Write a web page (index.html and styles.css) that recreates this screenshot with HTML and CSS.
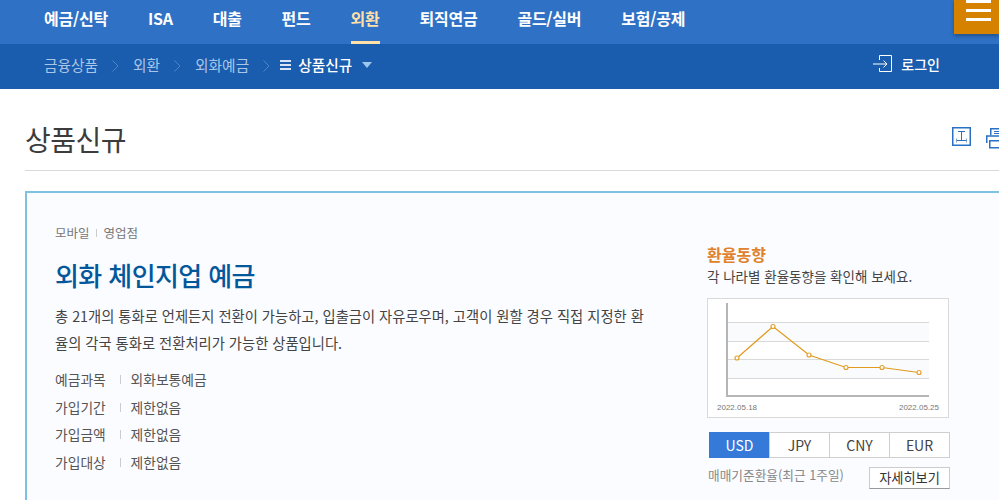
FILE: index.html
```html
<!DOCTYPE html>
<html lang="ko">
<head>
<meta charset="utf-8">
<title>상품신규</title>
<link rel="stylesheet" href="styles.css">
</head>
<body>
<header class="top">
  <nav class="gnb">
    <a>예금/신탁</a><a>ISA</a><a>대출</a><a>펀드</a><a class="on">외환</a><a>퇴직연금</a><a>골드/실버</a><a>보험/공제</a>
  </nav>
  <button class="menu" aria-label="메뉴"><i></i><i></i><i></i></button>
  <div class="crumbs">
    <span class="crumb">금융상품</span>
    <svg class="chev" width="7" height="12" viewBox="0 0 7 12"><path d="M.5.5 6 6 .5 11.500" fill="none" stroke="#4f86c6"/></svg>
    <span class="crumb">외환</span>
    <svg class="chev" width="7" height="12" viewBox="0 0 7 12"><path d="M.5.5 6 6 .5 11.500" fill="none" stroke="#4f86c6"/></svg>
    <span class="crumb">외화예금</span>
    <svg class="chev" width="7" height="12" viewBox="0 0 7 12"><path d="M.5.5 6 6 .5 11.500" fill="none" stroke="#4f86c6"/></svg>
    <span class="burger"><i></i><i></i><i></i></span>
    <span class="current">상품신규</span>
    <span class="caret"></span>
    <a class="login">
      <svg width="20" height="18" viewBox="0 0 20 18"><path d="M6.500 5V.5h12v16h-12V13M0 9h14M10.500 5.500 14 9l-3.500 3.500" fill="none" stroke="#fff"/></svg>
      로그인
    </a>
  </div>
</header>
<main class="page">
  <div class="title-row">
    <h1>상품신규</h1>
    <div class="tools">
      <svg width="19" height="19" viewBox="0 0 19 19"><path d="M.75.75h17.500v17.500H.75z" fill="none" stroke="#2a70c4" stroke-width="1.500"/><path d="M6 4.500h7M9.500 4.500V13M4.500 13.500h10" fill="none" stroke="#2a70c4"/><path d="M4.500 11.500v4M14.500 11.500v4" stroke="#7d9fca"/></svg>
      <svg width="20" height="22" viewBox="0 0 20 22"><path d="M4.750 8V1.750h16V8M.75 16V9h20M3.750 13.750h17v7h-17z" fill="none" stroke="#2a70c4" stroke-width="1.500"/><path d="M8 4.500h10M8 6.500h10" stroke="#2a70c4"/></svg>
    </div>
  </div>
  <section class="card">
    <div class="info">
      <p class="tags"><span>모바일</span><span class="tag-sep"></span><span>영업점</span></p>
      <h2>외화 체인지업 예금</h2>
      <p class="desc">총 21개의 통화로 언제든지 전환이 가능하고, 입출금이 자유로우며, 고객이 원할 경우 직접 지정한 환율의 각국 통화로 전환처리가 가능한 상품입니다.</p>
      <dl class="specs">
        <div><dt>예금과목</dt><dd>외화보통예금</dd></div>
        <div><dt>가입기간</dt><dd>제한없음</dd></div>
        <div><dt>가입금액</dt><dd>제한없음</dd></div>
        <div><dt>가입대상</dt><dd>제한없음</dd></div>
      </dl>
    </div>
    <aside class="rate">
      <h3>환율동향</h3>
      <p class="rate-sub">각 나라별 환율동향을 확인해 보세요.</p>
      <div class="chart">
        <svg width="241" height="118" viewBox="0 0 241 118">
          <rect x="20" y="23" width="201" height="19" fill="#fafbfc"/>
          <rect x="20" y="60" width="201" height="19" fill="#fafbfc"/>
          <path d="M20 23.500h201M20 42.500h201M20 60.500h201M20 79.500h201" stroke="#d9d9d9" fill="none"/>
          <path d="M19 4v94M19 97h202" stroke="#b5b5b5" stroke-width="2" fill="none"/>
          <polyline points="29,59 65,27.500 101,56 138,68.500 174,68.500 211,73.500" fill="none" stroke="#e09a1c" stroke-width="1.200"/>
          <g fill="#fff" stroke="#e3a12f" stroke-width="1.200">
            <circle cx="29" cy="59" r="2"/><circle cx="65" cy="27.500" r="2"/><circle cx="101" cy="56" r="2"/><circle cx="138" cy="68.500" r="2"/><circle cx="174" cy="68.500" r="2"/><circle cx="211" cy="73.500" r="2"/>
          </g>
        </svg>
        <div class="dates"><span>2022.05.18</span><span>2022.05.25</span></div>
      </div>
      <div class="tabs"><a class="on">USD</a><a>JPY</a><a>CNY</a><a>EUR</a></div>
      <div class="rate-foot"><span>매매기준환율(최근 1주일)</span><a class="more">자세히보기</a></div>
    </aside>
  </section>
</main>
</body>
</html>
```
FILE: styles.css
```css
* { box-sizing: border-box; }
html, body { margin: 0; height: 500px; overflow: hidden; background: #fff; }
body { width: 999px; font-family: "Noto Sans CJK KR", "Noto Sans", sans-serif; color: #444; }
h1, h2, h3, p, dl, dd { margin: 0; }

.top { position: relative; }
.gnb { height: 44px; background: #2e71c5; display: flex; gap: 40px; padding-left: 44px; }
.gnb a { height: 44px; line-height: 36px; font-size: 16px; font-weight: 700; letter-spacing: -0.25px; color: #fff; }
.gnb a.on { color: #ffe0a8; border-bottom: 3px solid #ffe0a8; }
.menu { position: absolute; top: 0; right: 0; width: 45px; height: 34px; padding: 0 0 0 12px; border: 0; background: #d48200; box-shadow: 0 2px 4px rgba(0,0,0,.3); display: flex; flex-direction: column; justify-content: flex-start; align-items: flex-start; gap: 6px; }
.menu i { display: block; width: 25px; height: 3px; background: #fff; }

.crumbs { height: 45px; background: #1a5cad; display: flex; align-items: center; padding: 0 59px 4px 44px; font-size: 14.700px; }
.crumb { color: #a9c6e8; }
.chev { margin: 3px 14px 0 14px; }
.burger { display: flex; flex-direction: column; gap: 2px; width: 11px; margin-right: 7px; margin-left: -4px; }
.burger i { display: block; height: 2px; background: #d6e4f5; }
.current { color: #fff; font-weight: 500; }
.caret { width: 0; height: 0; margin-left: 10px; border: 5px solid transparent; border-top: 6px solid #9fc6ee; border-bottom: 0; }
.login { margin-left: auto; display: flex; align-items: center; gap: 8px; color: #fff; font-size: 14px; font-weight: 500; margin-top: -2px; }

.page { padding: 0 0 0 25px; }
.title-row { height: 82px; border-bottom: 1px solid #d9d9d9; display: flex; justify-content: space-between; align-items: flex-start; padding-top: 30px; }
.title-row h1 { font-size: 28px; font-weight: 400; color: #3c3c3c; letter-spacing: -0.5px; line-height: 40px; }
.tools { display: flex; gap: 15px; width: 47px; overflow: hidden; flex: none; margin-top: 8px; }
.tools svg { flex: none; }

.card { margin-top: 20px; width: 1000px; height: 340px; border: 2px solid #7fc1e0; background: #fbfcff; padding: 31px 28px 0; display: flex; }
.info { width: 592px; flex: none; }
.tags { display: flex; align-items: center; font-size: 12.500px; color: #777; line-height: 18px; }
.tag-sep { width: 1px; height: 8px; background: #ccc; margin: 0 6.500px; }
h2 { font-size: 26px; font-weight: 500; color: #03589c; letter-spacing: -0.6px; line-height: 36px; margin-top: 15px; }
.desc { font-size: 14.300px; line-height: 27px; color: #444; margin-top: 9px; }
.specs { margin-top: 9.500px; font-size: 13.800px; color: #555; }
.specs div { display: flex; height: 27.500px; align-items: center; }
dt { width: 66px; position: relative; }
dt::after { content: ""; position: absolute; right: 0; top: 6px; width: 1px; height: 9px; background: #ccc; }
dd { margin-left: 9.500px; }

.rate { margin-left: 60px; width: 243px; padding-top: 19px; }
h3 { font-size: 16px; font-weight: 700; color: #e0822c; line-height: 22px; }
.rate-sub { font-size: 13.500px; color: #444; line-height: 22px; }
.chart { width: 242px; height: 120px; margin-top: 11px; border: 1px solid #d9d9d9; background: #fff; position: relative; }
.chart svg { display: block; }
.dates { position: absolute; left: 9px; right: 9px; bottom: 3px; display: flex; justify-content: space-between; font: 8px/12px "Liberation Sans", sans-serif; color: #777; }
.tabs { display: flex; margin: 14px 0 0 2px; width: 241px; height: 26px; }
.tabs a { flex: 1; border: 1px solid #cfcfcf; margin-left: -1px; font-size: 14px; line-height: 24px; text-align: center; color: #444; background: #fff; }
.tabs a:first-child { margin-left: 0; }
.tabs a.on { background: #3579d9; border-color: #3579d9; color: #fff; }
.rate-foot { display: flex; justify-content: space-between; align-items: flex-start; margin-top: 9px; padding-left: 1px; width: 243px; font-size: 12.700px; color: #888; }
.rate-foot span { line-height: 16px; }
.more { width: 81px; height: 22px; border: 1px solid #ccc; border-bottom-color: #999; font-size: 13.200px; line-height: 20px; text-align: center; color: #333; background: #fff; }
```
